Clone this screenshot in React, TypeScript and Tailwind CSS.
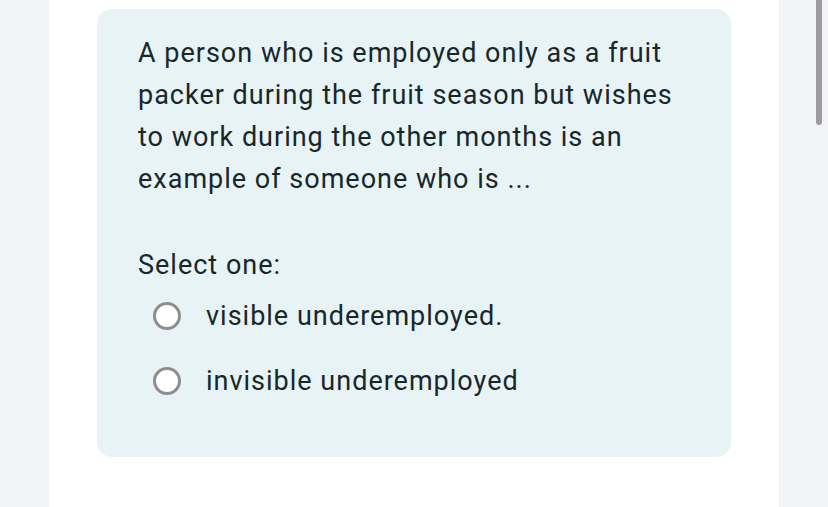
export default function App() {
  const options = ['visible underemployed.', 'invisible underemployed'];

  return (
    <div className="relative h-[507px] w-[828px] overflow-hidden bg-[#f1f3f7] font-['Roboto',sans-serif]">
      <div className="ml-[49px] h-full w-[730px] bg-white pt-[9px]">
        {/* Question card */}
        <div className="ml-[48px] w-[634px] rounded-[15px] bg-[#e7f3f5] pb-[55px] pl-[41px] pr-[43px] pt-[23px] text-[27px] leading-[42px] tracking-[1px] text-[#182729]">
          <p>
            A person who is employed only as a fruit packer during the fruit season but wishes to work
            during the other months is an example of someone who is ...
          </p>

          <p className="mt-[44px]">Select one:</p>

          <div className="mt-[9px] flex flex-col gap-[23px]">
            {options.map((opt) => (
              <label key={opt} className="flex items-center">
                <span className="ml-[15px] h-[28px] w-[28px] shrink-0 rounded-full border-[3px] border-[#8e8e8e] bg-white" />
                <span className="ml-[25px]">{opt}</span>
              </label>
            ))}
          </div>
        </div>
      </div>

      {/* Scrollbar thumb */}
      <div className="absolute right-[6px] top-0 h-[125px] w-[6px] rounded-b-full bg-[#9c9c9e]" />
    </div>
  );
}
